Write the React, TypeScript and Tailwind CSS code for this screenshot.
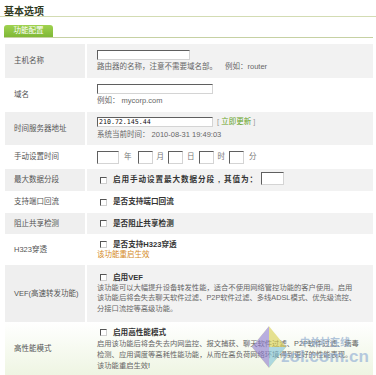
const font = "font-['Liberation_Sans','Noto_Sans_CJK_SC',sans-serif]";

const Box = ({ w, h = 'h-[10px]', children }: { w: string; h?: string; children?: React.ReactNode }) => (
  <span
    className={`inline-flex items-center bg-white border border-t-[#5f5f5f] border-l-[#5f5f5f] border-r-[#d4d4d4] border-b-[#d4d4d4] ${w} ${h}`}
  >
    {children}
  </span>
);

const Check = ({ label, wide }: { label: string; wide?: boolean }) => (
  <div className="flex items-center h-[10px] pl-[3px]">
    <span className="w-[7px] h-[7px] bg-white border border-t-[#555] border-l-[#555] border-r-[#cfcfcf] border-b-[#cfcfcf] mr-[6px]" />
    <span className={`text-[#333] text-[7.6px] font-bold ${wide ? 'tracking-[0.9px]' : ''}`}>{label}</span>
  </div>
);

type RowProps = {
  label: string;
  gray?: boolean;
  h: string;
  children: React.ReactNode;
  last?: boolean;
};

const Row = ({ label, gray, h, children, last }: RowProps) => (
  <div className={`flex ${h} ${last ? 'bg-gradient-to-b from-white to-[#eef5e2]' : ''}`}>
    <div className={`w-[80px] flex items-center pl-[9px] text-[#555] ${gray ? 'bg-[#efefef]' : ''}`}>{label}</div>
    <div className={`ml-[2px] flex-1 flex flex-col justify-center pl-[10px] ${gray ? 'bg-[#f2f2f2]' : ''}`}>{children}</div>
  </div>
);

export default function App() {
  return (
    <div className={`relative w-[376px] h-[375px] overflow-hidden bg-white ${font} text-[7.5px] leading-[10px]`}>
      <div className="pt-[5px] pl-[4px] h-[16px] text-[10px] leading-[11px] font-bold text-[#2f3a22] font-['Noto_Sans_CJK_SC',serif]">
        基本选项
      </div>
      <div className="h-[1px] bg-[#d3dcb3]" />
      <div className="mt-[8px] ml-[4px] w-[369px] border-b border-[#c6d1a3]">
        <div className="w-[49px] h-[12px] rounded-t-[3px] bg-gradient-to-b from-[#9fd24f] to-[#7fb836] text-white flex items-center justify-center text-[7.5px]">
          功能配置
        </div>
      </div>

      <div className="ml-[5px] mt-[6px] w-[368px] text-[#666]">
        <Row label="主机名称" gray h="h-[34px]">
          <Box w="w-[93px]" />
          <div className="mt-[2px] whitespace-nowrap">
            路由器的名称，注意不需要域名部。<span className="ml-[8px]">例如：router</span>
          </div>
        </Row>
        <Row label="域名" h="h-[34px]">
          <Box w="w-[116px]" />
          <div className="mt-[2px]">例如： mycorp.com</div>
        </Row>
        <Row label="时间服务器地址" gray h="h-[33px]">
          <div className="flex items-center">
            <Box w="w-[116px]">
              <span className="pl-[1px] text-[6.6px] text-[#111] font-['DejaVu_Sans_Mono',monospace]">210.72.145.44</span>
            </Box>
            <span className="ml-[4px] text-[#999]">
              [ <span className="text-[#66a31f]">立即更新</span> ]
            </span>
          </div>
          <div className="mt-[3px] whitespace-nowrap">系统当前时间： 2010-08-31 19:49:03</div>
        </Row>
        <Row label="手动设置时间" h="h-[24px]">
          <div className="flex items-center text-[#777]">
            <Box w="w-[22px]" h="h-[13px]" />
            <span className="ml-[5px] mr-[6px]">年</span>
            <Box w="w-[15px]" h="h-[13px]" />
            <span className="mx-[4px]">月</span>
            <Box w="w-[15px]" h="h-[13px]" />
            <span className="mx-[4px]">日</span>
            <Box w="w-[15px]" h="h-[13px]" />
            <span className="mx-[4px]">时</span>
            <Box w="w-[15px]" h="h-[13px]" />
            <span className="mx-[5px]">分</span>
          </div>
        </Row>
        <Row label="最大数据分段" gray h="h-[22px]">
          <div className="flex items-center">
            <Check label="启用手动设置最大数据分段 , 其值为：" wide />
            <span className="ml-[3px]">
              <Box w="w-[23px]" h="h-[13px]" />
            </span>
          </div>
        </Row>
        <Row label="支持端口回流" h="h-[22px]">
          <Check label="是否支持端口回流" />
        </Row>
        <Row label="阻止共享检测" gray h="h-[21px]">
          <Check label="是否阻止共享检测" />
        </Row>
        <Row label="H323穿透" h="h-[31px]">
          <Check label="是否支持H323穿透" />
          <div className="text-[#d4891c]">该功能重启生效</div>
        </Row>
        <Row label="VEF(高速转发功能)" gray h="h-[57px]">
          <Check label="启用VEF" />
          <div className="whitespace-nowrap text-[7.3px] leading-[10.5px]">
            该功能可以大幅提升设备转发性能，适合不使用网络管控功能的客户使用。启用
            <br />
            该功能后将会失去聊天软件过滤、P2P软件过滤、多线ADSL模式、优先级流控、
            <br />
            分接口流控等高级功能。
          </div>
        </Row>
        <Row label="高性能模式" h="h-[54px]" last>
          <Check label="启用高性能模式" />
          <div className="whitespace-nowrap text-[7.3px] leading-[11px]">
            启用该功能后将会失去内网监控、报文捕获、聊天软件过滤、P2P软件过滤、病毒
            <br />
            检测、应用调度等高耗性能功能，从而在高负荷网络环境得到更好的性能表现。
            <br />
            该功能重启生效<span className="text-[#333]">!</span>
          </div>
        </Row>
      </div>

      {/* zol watermark */}
      <div className="absolute left-[252px] top-[326px] flex items-end opacity-60 pointer-events-none">
        <svg width="34" height="42" viewBox="0 0 36 44">
          <polygon points="18,0 36,22 18,44 0,22" fill="#d8cf4a" />
          <polygon points="0,22 18,0 18,44" fill="#8d7bd0" />
          <polygon points="18,22 36,22 18,44" fill="#7fc3d8" />
        </svg>
        <div className="ml-[-5px] mb-[2px] flex flex-col items-center">
          <span className="text-[10px] leading-[12px] text-[#7f9fc8] font-bold font-['Noto_Sans_CJK_SC',sans-serif]">中关村在线</span>
          <span className="text-[17px] leading-[18px] text-[#8aa9d4] font-bold font-['Liberation_Sans',sans-serif]">zol.com.cn</span>
        </div>
      </div>
    </div>
  );
}
